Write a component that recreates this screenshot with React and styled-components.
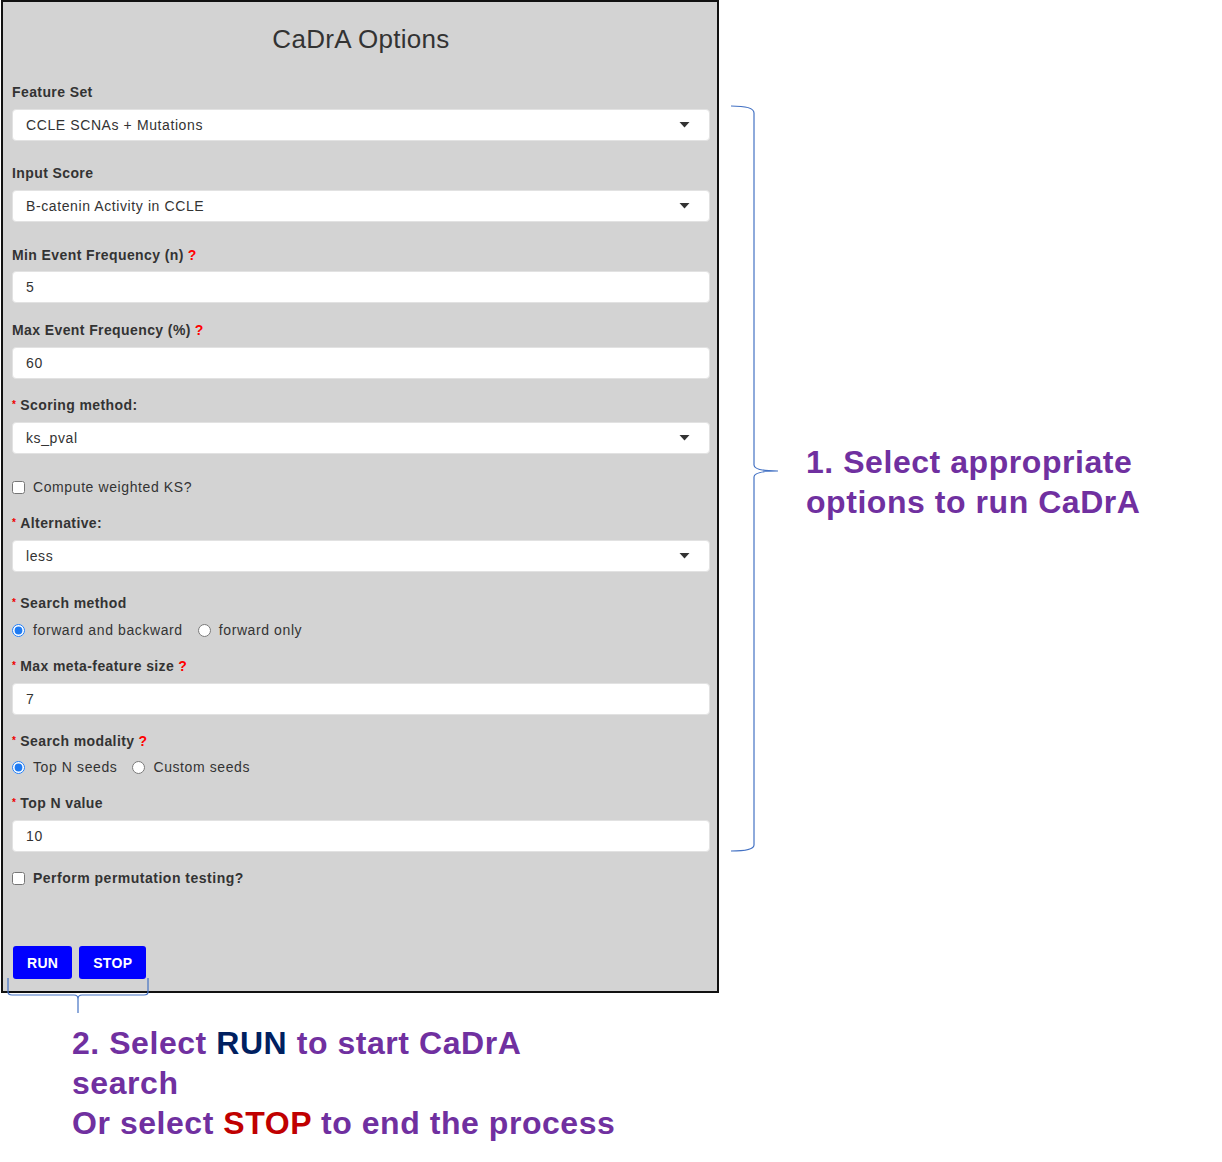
import styled, { createGlobalStyle } from 'styled-components';

const GlobalStyle = createGlobalStyle`
  body {
    margin: 0;
    background: #fff;
    font-family: "Liberation Sans", Arial, sans-serif;
  }
`;

const Page = styled.div`
  width: 1222px;
  min-height: 1162px;
  display: flex;
  flex-direction: column;
`;

const TopRow = styled.div`
  display: flex;
  align-items: flex-start;
`;

const Panel = styled.form`
  box-sizing: border-box;
  width: 718px;
  margin-left: 1px;
  border: 2px solid #111;
  background: #d3d3d3;
  padding: 22px 7px 12px 9px;
  color: #333;
`;

const Title = styled.h3`
  margin: 0;
  text-align: center;
  font-size: 26px;
  line-height: 30px;
  font-weight: normal;
  letter-spacing: 0.3px;
  color: #333;
`;

const Field = styled.div`
  margin-top: ${(p) => p.$mt}px;
`;

const Label = styled.div`
  font-size: 14px;
  line-height: 16px;
  font-weight: bold;
  letter-spacing: 0.4px;
  color: #333;
  margin-bottom: ${(p) => p.$mb ?? 9}px;
`;

const Req = styled.span`
  color: #e00;
  font-size: 10px;
  vertical-align: 2px;
  margin-right: 4px;
`;

const Help = styled.span`
  color: #f00;
  margin-left: 4px;
`;

const SelectBox = styled.div`
  box-sizing: border-box;
  height: 32px;
  display: flex;
  align-items: center;
  justify-content: space-between;
  padding: 0 19px 0 13px;
  background: #fff;
  border: 1px solid #e2e2e2;
  border-radius: 4px;
  font-size: 14px;
  letter-spacing: 0.6px;
  color: #333;
`;

const TextInput = styled.input`
  box-sizing: border-box;
  display: block;
  width: 100%;
  height: 32px;
  padding: 0 13px;
  background: #fff;
  border: 1px solid #e2e2e2;
  border-radius: 4px;
  font-family: inherit;
  font-size: 14px;
  letter-spacing: 0.6px;
  color: #333;
  outline: none;
`;

const CheckRow = styled.label`
  display: flex;
  align-items: center;
  gap: 8px;
  height: 16px;
  font-size: 14px;
  font-weight: ${(p) => (p.$bold ? 'bold' : 'normal')};
  letter-spacing: ${(p) => (p.$bold ? 0.5 : 0.6)}px;
  color: #333;

  input {
    margin: 0;
    width: 13px;
    height: 13px;
  }
`;

const RadioGroup = styled.div`
  display: flex;
  align-items: center;
  gap: 15px;
  height: 16px;
`;

const RadioOption = styled.label`
  display: flex;
  align-items: center;
  gap: 8px;
  font-size: 14px;
  letter-spacing: 0.6px;
  color: #333;

  input {
    margin: 0;
    width: 13px;
    height: 13px;
    accent-color: #1f7bf2;
  }
`;

const ButtonRow = styled.div`
  display: flex;
  gap: 7px;
  margin-top: 60px;
  padding-left: 1px;
`;

const ActionButton = styled.button`
  height: 33px;
  padding: 0 14px;
  border: none;
  border-radius: 3px;
  background: #0000ff;
  color: #fff;
  font-family: inherit;
  font-size: 14px;
  font-weight: bold;
  letter-spacing: 0.3px;
`;

const Side = styled.div`
  display: flex;
  align-items: flex-start;
  padding-top: 104px;
`;

const BraceSvg = styled.svg`
  display: block;
  flex: none;
  margin-left: ${(p) => p.$ml || 0}px;
`;

const Note = styled.p`
  margin: ${(p) => p.$mt}px 0 0 ${(p) => p.$ml}px;
  font-size: 32px;
  line-height: 40px;
  font-weight: bold;
  letter-spacing: 0.55px;
  color: #7030a0;
`;

const Run = styled.span`
  color: #002060;
`;

const Stop = styled.span`
  color: #c00000;
`;

const BottomRow = styled.div`
  position: relative;
`;

const BottomBrace = styled.svg`
  position: absolute;
  top: -17px;
  left: 6px;
`;

function Caret() {
  return (
    <svg width="11" height="6" viewBox="0 0 11 6">
      <path d="M0.5 0 H10.5 L5.5 5.5 Z" fill="#333" />
    </svg>
  );
}

function App() {
  return (
    <Page>
      <GlobalStyle />
      <TopRow>
        <Panel onSubmit={(e) => e.preventDefault()}>
          <Title>CaDrA Options</Title>

          <Field $mt={30}>
            <Label>Feature Set</Label>
            <SelectBox>CCLE SCNAs + Mutations<Caret /></SelectBox>
          </Field>

          <Field $mt={24}>
            <Label>Input Score</Label>
            <SelectBox>B-catenin Activity in CCLE<Caret /></SelectBox>
          </Field>

          <Field $mt={25}>
            <Label $mb={8}>Min Event Frequency (n)<Help>?</Help></Label>
            <TextInput defaultValue="5" />
          </Field>

          <Field $mt={19}>
            <Label>Max Event Frequency (%)<Help>?</Help></Label>
            <TextInput defaultValue="60" />
          </Field>

          <Field $mt={18}>
            <Label><Req>*</Req>Scoring method:</Label>
            <SelectBox>ks_pval<Caret /></SelectBox>
          </Field>

          <Field $mt={25}>
            <CheckRow><input type="checkbox" />Compute weighted KS?</CheckRow>
          </Field>

          <Field $mt={20}>
            <Label><Req>*</Req>Alternative:</Label>
            <SelectBox>less<Caret /></SelectBox>
          </Field>

          <Field $mt={23}>
            <Label $mb={11}><Req>*</Req>Search method</Label>
            <RadioGroup>
              <RadioOption><input type="radio" name="method" defaultChecked />forward and backward</RadioOption>
              <RadioOption><input type="radio" name="method" />forward only</RadioOption>
            </RadioGroup>
          </Field>

          <Field $mt={20}>
            <Label><Req>*</Req>Max meta-feature size<Help>?</Help></Label>
            <TextInput defaultValue="7" />
          </Field>

          <Field $mt={18}>
            <Label $mb={10}><Req>*</Req>Search modality<Help>?</Help></Label>
            <RadioGroup>
              <RadioOption><input type="radio" name="modality" defaultChecked />Top N seeds</RadioOption>
              <RadioOption><input type="radio" name="modality" />Custom seeds</RadioOption>
            </RadioGroup>
          </Field>

          <Field $mt={20}>
            <Label><Req>*</Req>Top N value</Label>
            <TextInput defaultValue="10" />
          </Field>

          <Field $mt={18}>
            <CheckRow $bold><input type="checkbox" />Perform permutation testing?</CheckRow>
          </Field>

          <ButtonRow>
            <ActionButton type="button">RUN</ActionButton>
            <ActionButton type="button">STOP</ActionButton>
          </ButtonRow>
        </Panel>

        <Side>
          <BraceSvg $ml={11} width="50" height="750" viewBox="0 0 50 750">
            <path
              d="M1 2 Q24 2 24 9 V361 Q24 367 48 367 Q24 367 24 373 V741 Q24 747 1 747"
              fill="none"
              stroke="#4472c4"
              strokeWidth="1.2"
            />
          </BraceSvg>
          <Note $mt={338} $ml={26}>
            1. Select appropriate
            <br />
            options to run CaDrA
          </Note>
        </Side>
      </TopRow>

      <BottomRow>
        <BottomBrace width="146" height="40" viewBox="0 0 146 40">
          <path
            d="M2 2 V16 Q2 19 6 19 H68 Q72 19 72 23 V37 M72 23 Q72 19 76 19 H138 Q142 19 142 16 V2"
            fill="none"
            stroke="#4472c4"
            strokeWidth="1.2"
          />
        </BottomBrace>
        <Note $mt={30} $ml={72}>
          2. Select <Run>RUN</Run> to start CaDrA
          <br />
          search
          <br />
          Or select <Stop>STOP</Stop> to end the process
        </Note>
      </BottomRow>
    </Page>
  );
}

export default App;
